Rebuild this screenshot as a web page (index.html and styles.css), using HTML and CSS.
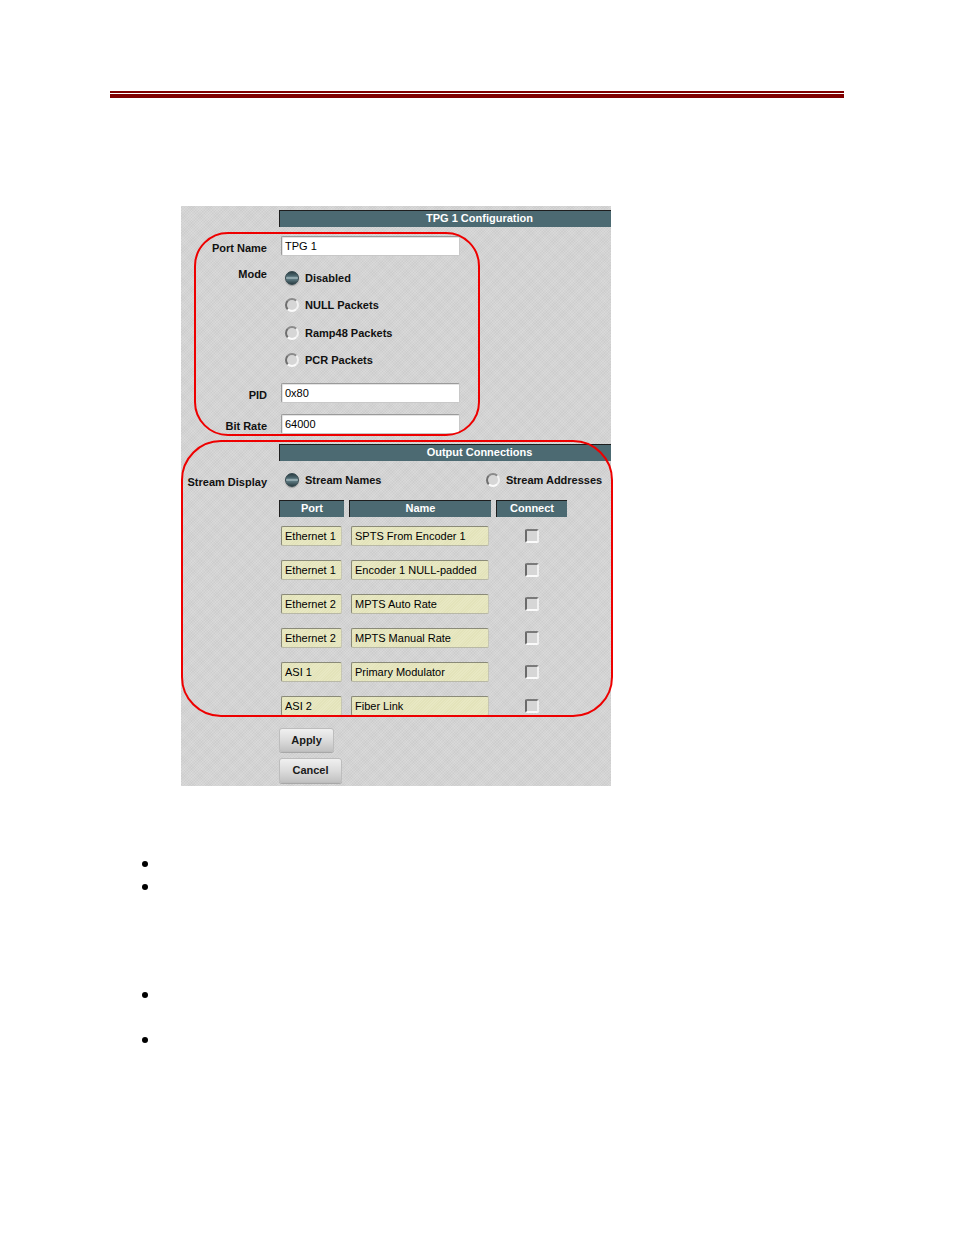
FILE: index.html
```html
<!DOCTYPE html>
<html>
<head>
<meta charset="utf-8">
<title>TPG 1 Configuration</title>
<link rel="stylesheet" href="styles.css">
</head>
<body>
<div class="page">
  <div class="rule">
    <div class="rule-thin"></div>
    <div class="rule-thick"></div>
  </div>

  <div class="panel">
    <div class="row bar-row">
      <div></div>
      <div class="bar">TPG 1 Configuration</div>
    </div>

    <div class="row field-row first-field">
      <div class="label">Port Name</div>
      <div><div class="text-input">TPG 1</div></div>
    </div>

    <div class="row mode-row">
      <div class="label label-mode">Mode</div>
      <div class="radio-group">
        <div class="radio-item"><span class="radio on"></span><span class="radio-text">Disabled</span></div>
        <div class="radio-item"><span class="radio"></span><span class="radio-text">NULL Packets</span></div>
        <div class="radio-item"><span class="radio"></span><span class="radio-text">Ramp48 Packets</span></div>
        <div class="radio-item"><span class="radio"></span><span class="radio-text">PCR Packets</span></div>
      </div>
    </div>

    <div class="row field-row pid-row">
      <div class="label">PID</div>
      <div><div class="text-input">0x80</div></div>
    </div>

    <div class="row field-row rate-row">
      <div class="label">Bit Rate</div>
      <div><div class="text-input">64000</div></div>
    </div>

    <div class="row bar-row bar2-row">
      <div></div>
      <div class="bar">Output Connections</div>
    </div>

    <div class="row display-row">
      <div class="label">Stream Display</div>
      <div class="display-options">
        <div class="radio-item names-item"><span class="radio on"></span><span class="radio-text">Stream Names</span></div>
        <div class="radio-item"><span class="radio"></span><span class="radio-text">Stream Addresses</span></div>
      </div>
    </div>

    <div class="row head-row">
      <div></div>
      <div class="cols">
        <div class="col-head">Port</div>
        <div class="col-head">Name</div>
        <div class="col-head">Connect</div>
      </div>
    </div>

    <div class="row data-row">
      <div></div>
      <div class="cols">
        <div class="cell-input">Ethernet 1</div>
        <div class="cell-input">SPTS From Encoder 1</div>
        <div class="check-cell"><span class="checkbox"></span></div>
      </div>
    </div>
    <div class="row data-row">
      <div></div>
      <div class="cols">
        <div class="cell-input">Ethernet 1</div>
        <div class="cell-input">Encoder 1 NULL-padded</div>
        <div class="check-cell"><span class="checkbox"></span></div>
      </div>
    </div>
    <div class="row data-row">
      <div></div>
      <div class="cols">
        <div class="cell-input">Ethernet 2</div>
        <div class="cell-input">MPTS Auto Rate</div>
        <div class="check-cell"><span class="checkbox"></span></div>
      </div>
    </div>
    <div class="row data-row">
      <div></div>
      <div class="cols">
        <div class="cell-input">Ethernet 2</div>
        <div class="cell-input">MPTS Manual Rate</div>
        <div class="check-cell"><span class="checkbox"></span></div>
      </div>
    </div>
    <div class="row data-row">
      <div></div>
      <div class="cols">
        <div class="cell-input">ASI 1</div>
        <div class="cell-input">Primary Modulator</div>
        <div class="check-cell"><span class="checkbox"></span></div>
      </div>
    </div>
    <div class="row data-row">
      <div></div>
      <div class="cols">
        <div class="cell-input">ASI 2</div>
        <div class="cell-input">Fiber Link</div>
        <div class="check-cell"><span class="checkbox"></span></div>
      </div>
    </div>

    <div class="row button-row apply-row">
      <div></div>
      <div><div class="btn btn-apply">Apply</div></div>
    </div>
    <div class="row button-row cancel-row">
      <div></div>
      <div><div class="btn btn-cancel">Cancel</div></div>
    </div>

    <div class="callout callout-port"></div>
    <div class="callout callout-output"></div>
  </div>

  <div class="bullets">
    <div class="bullet b1"></div>
    <div class="bullet b2"></div>
    <div class="bullet b3"></div>
    <div class="bullet b4"></div>
  </div>
</div>
</body>
</html>
```

FILE: styles.css
```css
html, body {
  margin: 0;
  padding: 0;
  background: #ffffff;
}

.page {
  width: 954px;
  min-height: 1235px;
  padding-top: 91px;
  box-sizing: border-box;
  font-family: "Liberation Sans", Arial, sans-serif;
}

/* header rules */
.rule {
  margin-left: 110px;
  width: 734px;
}
.rule-thin {
  height: 2px;
  background: #800000;
}
.rule-thick {
  margin-top: 1px;
  height: 4px;
  background: #800000;
}

/* panel */
.panel {
  position: relative;
  margin-top: 108px;
  margin-left: 181px;
  width: 430px;
  height: 580px;
  padding-top: 4px;
  box-sizing: border-box;
  background-color: #d5d5d5;
  background-image:
    repeating-linear-gradient(135deg, rgba(255,255,255,0.06) 0 1px, rgba(0,0,0,0.02) 1px 2px),
    repeating-linear-gradient(45deg, rgba(255,255,255,0.04) 0 1px, rgba(0,0,0,0.02) 1px 2px);
}

.row {
  display: grid;
  grid-template-columns: 86px 332px;
  column-gap: 12px;
}

.label {
  text-align: right;
  font-size: 11px;
  font-weight: bold;
  color: #111;
  padding-top: 4px;
  line-height: 16px;
}

.bar {
  height: 17px;
  box-sizing: border-box;
  background: #4c6a72;
  border-top: 1px solid #1e1e1e;
  border-left: 1px solid #1e1e1e;
  color: #ffffff;
  font-size: 11px;
  font-weight: bold;
  line-height: 15px;
  text-align: center;
  padding-left: 68px;
}

.first-field { margin-top: 9px; }
.pid-row { margin-top: 16px; }
.rate-row { margin-top: 11px; }
.bar2-row { margin-top: 10px; }

.text-input {
  margin-left: 2px;
  width: 179px;
  height: 20px;
  box-sizing: border-box;
  background: #ffffff;
  border: 1px solid;
  border-color: #9a9a9a #c8c8c8 #c8c8c8 #9a9a9a;
  border-radius: 2px;
  box-shadow: inset 1px 1px 0 #e4e4e4;
  font-size: 11px;
  line-height: 18px;
  padding-left: 3px;
  color: #000;
}

/* mode radios */
.mode-row { margin-top: 11px; }
.label-mode {
  padding-top: 0;
  line-height: 14px;
}
.radio-group {
  display: flex;
  flex-direction: column;
  gap: 13.33px;
  padding-top: 4px;
}
.radio-item {
  display: flex;
  align-items: center;
  height: 14px;
  padding-left: 6px;
}
.radio {
  width: 14px;
  height: 14px;
  box-sizing: border-box;
  border-radius: 50%;
  border: 2px solid;
  border-color: #8a8a8a #f2f2f2 #fbfbfb #6e6e6e;
  background: #d6d6d6;
  flex: none;
}
.radio.on {
  border: 1px solid #32464c;
  background: linear-gradient(180deg, #2c3f45 0%, #4e6a72 35%, #a9bec3 50%, #5a767e 62%, #2c3f45 100%);
  box-shadow: 0 1px 1px rgba(0,0,0,0.25);
}
.radio-text {
  margin-left: 6px;
  font-size: 11px;
  font-weight: bold;
  color: #111;
  white-space: nowrap;
}

/* stream display */
.display-row {
  margin-top: 9px;
  height: 20px;
}
.display-options {
  display: flex;
  align-items: flex-start;
  padding-top: 3px;
}
.names-item {
  width: 195px;
}

/* table */
.head-row { margin-top: 10px; }
.cols {
  display: grid;
  grid-template-columns: 65px 142px 71px;
  column-gap: 5px;
}
.col-head {
  height: 17px;
  box-sizing: border-box;
  background: #4c6a72;
  border-top: 1px solid #1e1e1e;
  border-left: 1px solid #1e1e1e;
  color: #ffffff;
  font-size: 11px;
  font-weight: bold;
  line-height: 15px;
  text-align: center;
}

.data-row { margin-top: 14px; }
.head-row + .data-row { margin-top: 9px; }
.cell-input {
  margin: 0 2px;
  height: 20px;
  box-sizing: border-box;
  background-color: #e6e6bf;
  background-image: repeating-linear-gradient(135deg, #e8e8c3 0 1px, #e3e3ba 1px 2px);
  border: 1px solid;
  border-color: #8a8a78 #c6c6b4 #b8b8a6 #8a8a78;
  border-radius: 2px;
  font-size: 11px;
  line-height: 18px;
  padding-left: 3px;
  color: #000;
  white-space: nowrap;
  overflow: hidden;
}
.check-cell {
  display: flex;
  align-items: center;
  justify-content: center;
}
.checkbox {
  width: 14px;
  height: 14px;
  box-sizing: border-box;
  border: 2px solid;
  border-color: #7a7a7a #f0f0f0 #fafafa #6a6a6a;
  border-radius: 2px;
  background: #d6d6d6;
}

/* buttons */
.apply-row { margin-top: 12px; }
.cancel-row { margin-top: 6px; }
.btn {
  height: 24px;
  box-sizing: border-box;
  border: 1px solid #bdbdbd;
  border-radius: 3px;
  background: linear-gradient(180deg, #f0f0f0 0%, #dcdcdc 50%, #c2c2c2 100%);
  box-shadow: 0 1px 0 #a8a8a8;
  font-size: 11px;
  font-weight: bold;
  color: #1a1a1a;
  text-align: center;
  line-height: 22px;
}
.btn-apply { width: 55px; }
.btn-cancel { width: 63px; height: 25px; line-height: 23px; }

/* red annotation callouts */
.callout {
  position: absolute;
  box-sizing: border-box;
  border: 2px solid #ee0000;
  pointer-events: none;
}
.callout-port {
  left: 13px;
  top: 26px;
  width: 286px;
  height: 204px;
  border-radius: 34px;
}
.callout-output {
  left: 0;
  top: 234px;
  width: 432px;
  height: 277px;
  border-radius: 40px;
}

/* bullets */
.bullets {
  margin-left: 142px;
  padding-top: 75px;
}
.bullet {
  width: 6px;
  height: 6px;
  border-radius: 50%;
  background: #000;
}
.b2 { margin-top: 17px; }
.b3 { margin-top: 102px; }
.b4 { margin-top: 39px; }
```
